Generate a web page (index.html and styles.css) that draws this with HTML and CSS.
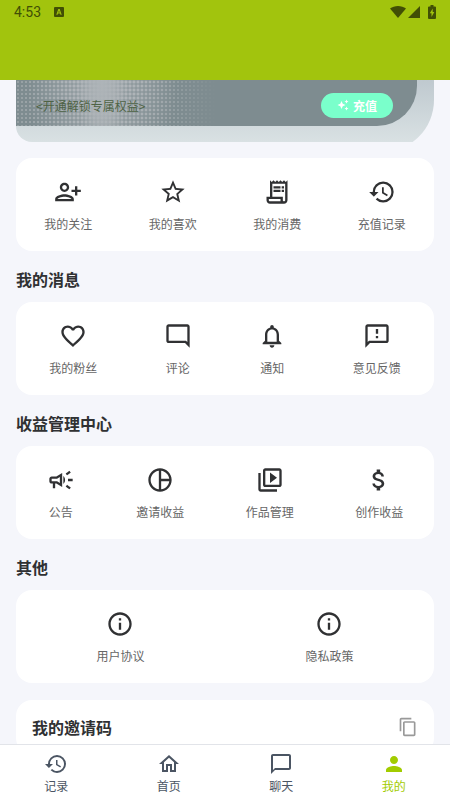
FILE: index.html
```html
<!DOCTYPE html>
<html lang="zh-CN">
<head>
<meta charset="utf-8">
<meta name="viewport" content="width=device-width, initial-scale=1">
<title>我的</title>
<link rel="stylesheet" href="styles.css">
</head>
<body>
<header class="topbar">
  <div class="status">
    <span class="clock">4:53</span>
    <svg class="status-app" viewBox="0 0 10 10" aria-hidden="true"><path fill-rule="evenodd" d="M1 0h8a1 1 0 0 1 1 1v8a1 1 0 0 1-1 1H1a1 1 0 0 1-1-1V1a1 1 0 0 1 1-1zM4.300 2L2.300 7.800h1.200l.4-1.200h2.200l.4 1.200h1.200L5.700 2zM5 3.500l.7 2.100H4.300z"/></svg>
    <span class="status-right">
      <svg class="wifi" viewBox="0 0 16 12" aria-hidden="true"><path d="M8 12L0 2.500C2.200.9 5 0 8 0s5.800.9 8 2.500z"/></svg>
      <svg class="signal" viewBox="0 0 12 12" aria-hidden="true"><path d="M0 12L12 0v12z"/></svg>
      <svg class="battery" viewBox="0 0 8 14" aria-hidden="true"><path fill-rule="evenodd" d="M2.500 0h3v1.500H7a1 1 0 0 1 1 1V13a1 1 0 0 1-1 1H1a1 1 0 0 1-1-1V2.500a1 1 0 0 1 1-1h1.500zM4.700 3.500L1.800 8.300h1.700V12l2.800-5H4.700z"/></svg>
    </span>
  </div>
</header>

<main class="content">
  <section class="banner">
    <div class="banner-back">
      <div class="banner-front">
        <span class="banner-text">&lt;开通解锁专属权益&gt;</span>
        <button class="recharge" type="button">
          <svg viewBox="0 0 24 24" aria-hidden="true"><path d="M19 9l1.250-2.750L23 5l-2.750-1.250L19 1l-1.250 2.750L15 5l2.750 1.250L19 9zm-7.500.5L9 4 6.500 9.500 1 12l5.500 2.500L9 20l2.500-5.500L17 12l-5.500-2.500zM19 15l-1.250 2.750L15 19l2.750 1.250L19 23l1.250-2.750L23 19l-2.750-1.250L19 15z"/></svg>
          充值
        </button>
      </div>
    </div>
  </section>

  <section class="card">
    <a class="item" href="#"><svg viewBox="0 0 24 24" aria-hidden="true"><path d="M13 8c0-2.210-1.790-4-4-4S5 5.790 5 8s1.790 4 4 4 4-1.790 4-4zm-2 0c0 1.100-.9 2-2 2s-2-.9-2-2 .9-2 2-2 2 .9 2 2zM1 18v2h16v-2c0-2.660-5.330-4-8-4s-8 1.340-8 4zm2 0c.2-.71 3.300-2 6-2 2.690 0 5.780 1.280 6 2H3zm17-3v-3h3v-2h-3V7h-2v3h-3v2h3v3h2z"/></svg><span>我的关注</span></a>
    <a class="item" href="#"><svg viewBox="0 0 24 24" aria-hidden="true"><path d="M22 9.240l-7.190-.62L12 2 9.190 8.630 2 9.240l5.460 4.730L5.820 21 12 17.270 18.180 21l-1.630-7.030L22 9.240zM12 15.400l-3.760 2.270 1-4.280-3.320-2.880 4.380-.38L12 6.100l1.710 4.040 4.380.38-3.320 2.880 1 4.280L12 15.400z"/></svg><span>我的喜欢</span></a>
    <a class="item" href="#"><svg viewBox="0 0 24 24" aria-hidden="true"><path d="M19.500 3.500L18 2l-1.500 1.500L15 2l-1.500 1.500L12 2l-1.500 1.500L9 2 7.500 3.500 6 2v14H3v3c0 1.660 1.340 3 3 3h12c1.660 0 3-1.340 3-3V2l-1.500 1.500zM15 20H6c-.55 0-1-.45-1-1v-1h10v2zm4-1c0 .55-.45 1-1 1s-1-.45-1-1v-3H8V5h11v14zM9 7h6v2H9zM16 7h2v2h-2zM9 10h6v2H9zM16 10h2v2h-2z"/></svg><span>我的消费</span></a>
    <a class="item" href="#"><svg viewBox="0 0 24 24" aria-hidden="true"><path d="M13 3a9 9 0 0 0-9 9H1l3.890 3.890.07.14L9 12H6c0-3.870 3.130-7 7-7s7 3.130 7 7-3.130 7-7 7c-1.930 0-3.680-.79-4.940-2.060l-1.420 1.420A8.950 8.950 0 0 0 13 21a9 9 0 0 0 0-18zm-1 5v5l4.280 2.540.72-1.210-3.500-2.080V8H12z"/></svg><span>充值记录</span></a>
  </section>

  <h2 class="heading">我的消息</h2>
  <section class="card">
    <a class="item" href="#"><svg viewBox="0 0 24 24" aria-hidden="true"><path d="M16.500 3c-1.740 0-3.410.81-4.500 2.090C10.910 3.810 9.240 3 7.500 3 4.420 3 2 5.420 2 8.500c0 3.780 3.400 6.860 8.550 11.540L12 21.350l1.450-1.320C18.600 15.360 22 12.280 22 8.500 22 5.420 19.580 3 16.500 3zm-4.400 15.550l-.1.100-.1-.1C7.140 14.240 4 11.390 4 8.500 4 6.500 5.500 5 7.500 5c1.540 0 3.040.99 3.570 2.360h1.870C13.460 5.990 14.960 5 16.500 5c2 0 3.500 1.500 3.500 3.500 0 2.890-3.140 5.740-7.900 10.050z"/></svg><span>我的粉丝</span></a>
    <a class="item" href="#"><svg viewBox="0 0 24 24" aria-hidden="true"><path d="M20 17.170L18.830 16H4V4h16v13.170zM20 2H4c-1.100 0-2 .9-2 2v12c0 1.100.9 2 2 2h14l4 4V4c0-1.100-.9-2-2-2z"/></svg><span>评论</span></a>
    <a class="item" href="#"><svg viewBox="0 0 24 24" aria-hidden="true"><path d="M12 22c1.100 0 2-.9 2-2h-4c0 1.100.9 2 2 2zm6-6v-5c0-3.070-1.630-5.640-4.500-6.320V4c0-.83-.67-1.500-1.500-1.500s-1.500.67-1.500 1.500v.68C7.640 5.360 6 7.920 6 11v5l-2 2v1h16v-1l-2-2zm-2 1H8v-6c0-2.480 1.510-4.500 4-4.500s4 2.020 4 4.500v6z"/></svg><span>通知</span></a>
    <a class="item" href="#"><svg viewBox="0 0 24 24" aria-hidden="true"><path d="M20 2H4c-1.100 0-1.990.9-1.990 2L2 22l4-4h14c1.100 0 2-.9 2-2V4c0-1.100-.9-2-2-2zm0 14H5.170L4 17.170V4h16v12zm-9-4h2v2h-2zm0-6h2v4h-2z"/></svg><span>意见反馈</span></a>
  </section>

  <h2 class="heading">收益管理中心</h2>
  <section class="card">
    <a class="item" href="#"><svg viewBox="0 0 24 24" aria-hidden="true"><path d="M18 11v2h4v-2h-4zM16 17.610c.96.71 2.210 1.650 3.200 2.390.4-.53.8-1.070 1.200-1.600-.99-.74-2.240-1.680-3.200-2.400-.4.54-.8 1.080-1.200 1.610zM20.400 5.600c-.4-.53-.8-1.070-1.200-1.600-.99.74-2.240 1.680-3.200 2.400.4.53.8 1.070 1.200 1.600.96-.72 2.210-1.650 3.200-2.400zM4 9c-1.100 0-2 .9-2 2v2c0 1.100.9 2 2 2h1v4h2v-4h1l5 3V6L8 9H4zm5.030 1.710L11 9.530v4.940l-1.970-1.180-.48-.29H4v-2h4.550l.48-.29zM15.500 12c0-1.330-.58-2.530-1.500-3.350v6.690c.92-.81 1.500-2.010 1.500-3.340z"/></svg><span>公告</span></a>
    <a class="item" href="#"><svg viewBox="0 0 24 24" aria-hidden="true"><path d="M12 2C6.480 2 2 6.480 2 12s4.480 10 10 10 10-4.480 10-10S17.520 2 12 2zm1 2.070c3.610.45 6.480 3.330 6.930 6.930H13V4.070zM4 12c0-4.060 3.070-7.440 7-7.930v15.870c-3.930-.5-7-3.880-7-7.940zm9 7.930V13h6.930c-.45 3.610-3.320 6.480-6.930 6.930z"/></svg><span>邀请收益</span></a>
    <a class="item" href="#"><svg viewBox="0 0 24 24" aria-hidden="true"><path d="M4 6H2v14c0 1.100.9 2 2 2h14v-2H4V6zm16-4H8c-1.100 0-2 .9-2 2v12c0 1.100.9 2 2 2h12c1.100 0 2-.9 2-2V4c0-1.100-.9-2-2-2zm0 14H8V4h12v12zM12 5.500v9l6-4.500z"/></svg><span>作品管理</span></a>
    <a class="item" href="#"><svg viewBox="0 0 24 24" aria-hidden="true"><path d="M11.800 10.900c-2.270-.59-3-1.200-3-2.150 0-1.090 1.010-1.850 2.700-1.850 1.780 0 2.440.85 2.500 2.100h2.210c-.07-1.720-1.120-3.300-3.210-3.810V3h-3v2.160c-1.940.42-3.500 1.680-3.500 3.610 0 2.310 1.910 3.460 4.700 4.130 2.500.6 3 1.480 3 2.410 0 .69-.49 1.790-2.700 1.790-2.060 0-2.870-.92-2.980-2.100h-2.200c.12 2.190 1.760 3.420 3.680 3.830V21h3v-2.150c1.950-.37 3.500-1.500 3.500-3.550 0-2.840-2.430-3.810-4.700-4.400z"/></svg><span>创作收益</span></a>
  </section>

  <h2 class="heading">其他</h2>
  <section class="card">
    <a class="item" href="#"><svg viewBox="0 0 24 24" aria-hidden="true"><path d="M11 7h2v2h-2zm0 4h2v6h-2zm1-9C6.480 2 2 6.480 2 12s4.480 10 10 10 10-4.480 10-10S17.520 2 12 2zm0 18c-4.410 0-8-3.590-8-8s3.590-8 8-8 8 3.590 8 8-3.590 8-8 8z"/></svg><span>用户协议</span></a>
    <a class="item" href="#"><svg viewBox="0 0 24 24" aria-hidden="true"><path d="M11 7h2v2h-2zm0 4h2v6h-2zm1-9C6.480 2 2 6.480 2 12s4.480 10 10 10 10-4.480 10-10S17.520 2 12 2zm0 18c-4.410 0-8-3.590-8-8s3.590-8 8-8 8 3.590 8 8-3.590 8-8 8z"/></svg><span>隐私政策</span></a>
  </section>

  <section class="invite">
    <h2 class="invite-title">我的邀请码</h2>
    <button class="copy" type="button" aria-label="复制"><svg viewBox="0 0 24 24" aria-hidden="true"><path d="M16 1H4c-1.100 0-2 .9-2 2v14h2V3h12V1zm3 4H8c-1.100 0-2 .9-2 2v14c0 1.100.9 2 2 2h11c1.100 0 2-.9 2-2V7c0-1.100-.9-2-2-2zm0 16H8V7h11v14z"/></svg></button>
  </section>
</main>

<nav class="tabs">
  <a class="tab" href="#"><svg viewBox="0 0 24 24" aria-hidden="true"><path d="M13 3a9 9 0 0 0-9 9H1l3.890 3.890.07.14L9 12H6c0-3.870 3.130-7 7-7s7 3.130 7 7-3.130 7-7 7c-1.930 0-3.680-.79-4.940-2.060l-1.420 1.420A8.950 8.950 0 0 0 13 21a9 9 0 0 0 0-18zm-1 5v5l4.280 2.540.72-1.210-3.500-2.080V8H12z"/></svg><span>记录</span></a>
  <a class="tab" href="#"><svg viewBox="0 0 24 24" aria-hidden="true"><path d="M12 5.690l5 4.500V18h-2v-6H9v6H7v-7.810l5-4.500M12 3L2 12h3v8h6v-6h2v6h6v-8h3L12 3z"/></svg><span>首页</span></a>
  <a class="tab" href="#"><svg viewBox="0 0 24 24" aria-hidden="true"><path d="M20 2H4c-1.100 0-2 .9-2 2v18l4-4h14c1.100 0 2-.9 2-2V4c0-1.100-.9-2-2-2zm0 14H6l-2 2V4h16v12z"/></svg><span>聊天</span></a>
  <a class="tab active" href="#" aria-current="page"><svg viewBox="0 0 24 24" aria-hidden="true"><path d="M12 12c2.210 0 4-1.790 4-4s-1.790-4-4-4-4 1.790-4 4 1.790 4 4 4zm0 2c-2.670 0-8 1.340-8 4v2h16v-2c0-2.660-5.330-4-8-4z"/></svg><span>我的</span></a>
</nav>
</body>
</html>
```
FILE: styles.css
```css
* {
  box-sizing: border-box;
}

body {
  margin: 0;
  height: 100vh;
  display: flex;
  flex-direction: column;
  background: #f5f6fb;
  color: #303133;
  font-family: "Noto Sans CJK SC", sans-serif;
}

svg {
  display: block;
  fill: currentColor;
}

a {
  color: inherit;
  text-decoration: none;
}

button {
  border: 0;
  padding: 0;
  font: inherit;
}

/* Top bar */
.topbar {
  flex: none;
  height: 80px;
  background: #a2c40d;
  color: #414f05;
}

.status {
  display: flex;
  align-items: center;
  height: 24px;
  padding: 0 14px;
}

.clock {
  font-family: Roboto, sans-serif;
  font-size: 14px;
  line-height: 24px;
}

.status-app {
  width: 10px;
  height: 10px;
  margin-left: 13px;
}

.status-right {
  display: flex;
  align-items: center;
  margin-left: auto;
}

.wifi {
  width: 16px;
  height: 12px;
}

.signal {
  width: 12px;
  height: 12px;
  margin: 0 8px 0 2px;
}

.battery {
  width: 8px;
  height: 14px;
}

/* Content */
.content {
  flex: 1;
  min-height: 0;
  overflow: hidden;
  padding: 0 16px;
}

.banner {
  height: 62px;
  margin-bottom: 16px;
  overflow: hidden;
  border-radius: 0 0 0 16px;
}

.banner-back {
  height: 72px;
  background: linear-gradient(#bfc9cf, #d9e1e3 62px);
  border-radius: 0 0 52px 0;
}

.banner-front {
  position: relative;
  display: flex;
  align-items: center;
  justify-content: space-between;
  height: 46px;
  margin-right: 17px;
  padding: 6px 24px 2px 20px;
  overflow: hidden;
  background: #7e8c90;
  border-radius: 0 0 40px 0;
}

/* Halftone dots: small ones spread wide, large ones around the bright column */
.banner-front::before,
.banner-front::after {
  content: "";
  position: absolute;
  inset: 0 auto 0 0;
  width: 200px;
}

.banner-front::before {
  background: radial-gradient(circle, #adb3b6 1px, transparent 1px) 0 0 / 4px 4px;
  mask-image: linear-gradient(90deg, #0008, #000c 50px, #000 86px, #000a 140px, transparent);
}

.banner-front::after {
  background:
    radial-gradient(ellipse 24px 110px at 86px 0, #aeb4b8, #aeb4b8aa 50%, transparent),
    radial-gradient(circle, #b1b6ba 1px, transparent 3px) 0 0 / 4px 4px;
  mask-image: radial-gradient(ellipse 76px 120px at 86px 0, #000 30%, transparent);
}

.banner-text {
  position: relative;
  z-index: 1;
  color: #4e6345;
  font-size: 12px;
  line-height: 17px;
}

.recharge {
  display: flex;
  align-items: center;
  justify-content: center;
  gap: 4px;
  width: 72px;
  height: 25px;
  background: #7affcb;
  border-radius: 13px;
  color: #fff;
  font-size: 12px;
  font-weight: 700;
}

.recharge svg {
  width: 12px;
  height: 12px;
}

.card {
  display: flex;
  justify-content: space-around;
  padding: 20px 0 18px;
  background: #fff;
  border-radius: 16px;
}

.item {
  display: flex;
  flex-direction: column;
  align-items: center;
  gap: 9px;
  color: #303133;
}

.item svg {
  width: 28px;
  height: 28px;
}

.item span {
  color: #666;
  font-size: 12px;
  line-height: 18px;
}

.heading,
.invite-title {
  margin: 0;
  font-size: 16px;
  font-weight: 700;
  line-height: 20px;
}

.heading {
  padding: 18px 0 13px;
}

.invite {
  display: flex;
  align-items: center;
  justify-content: space-between;
  margin-top: 17px;
  padding: 17px 16px;
  background: #fff;
  border-radius: 16px;
}

.copy {
  background: none;
  color: #999;
}

.copy svg {
  width: 20px;
  height: 20px;
}

/* Bottom tabs */
.tabs {
  flex: none;
  display: flex;
  height: 56px;
  background: #fff;
  border-top: 1px solid #e2e4e9;
  color: #4b5563;
}

.tab {
  flex: 1;
  display: flex;
  flex-direction: column;
  align-items: center;
  padding-top: 7px;
  gap: 1px;
}

.tab svg {
  width: 24px;
  height: 24px;
}

.tab span {
  font-size: 12px;
  line-height: 18px;
}

.active {
  color: #a2cc00;
}
```
